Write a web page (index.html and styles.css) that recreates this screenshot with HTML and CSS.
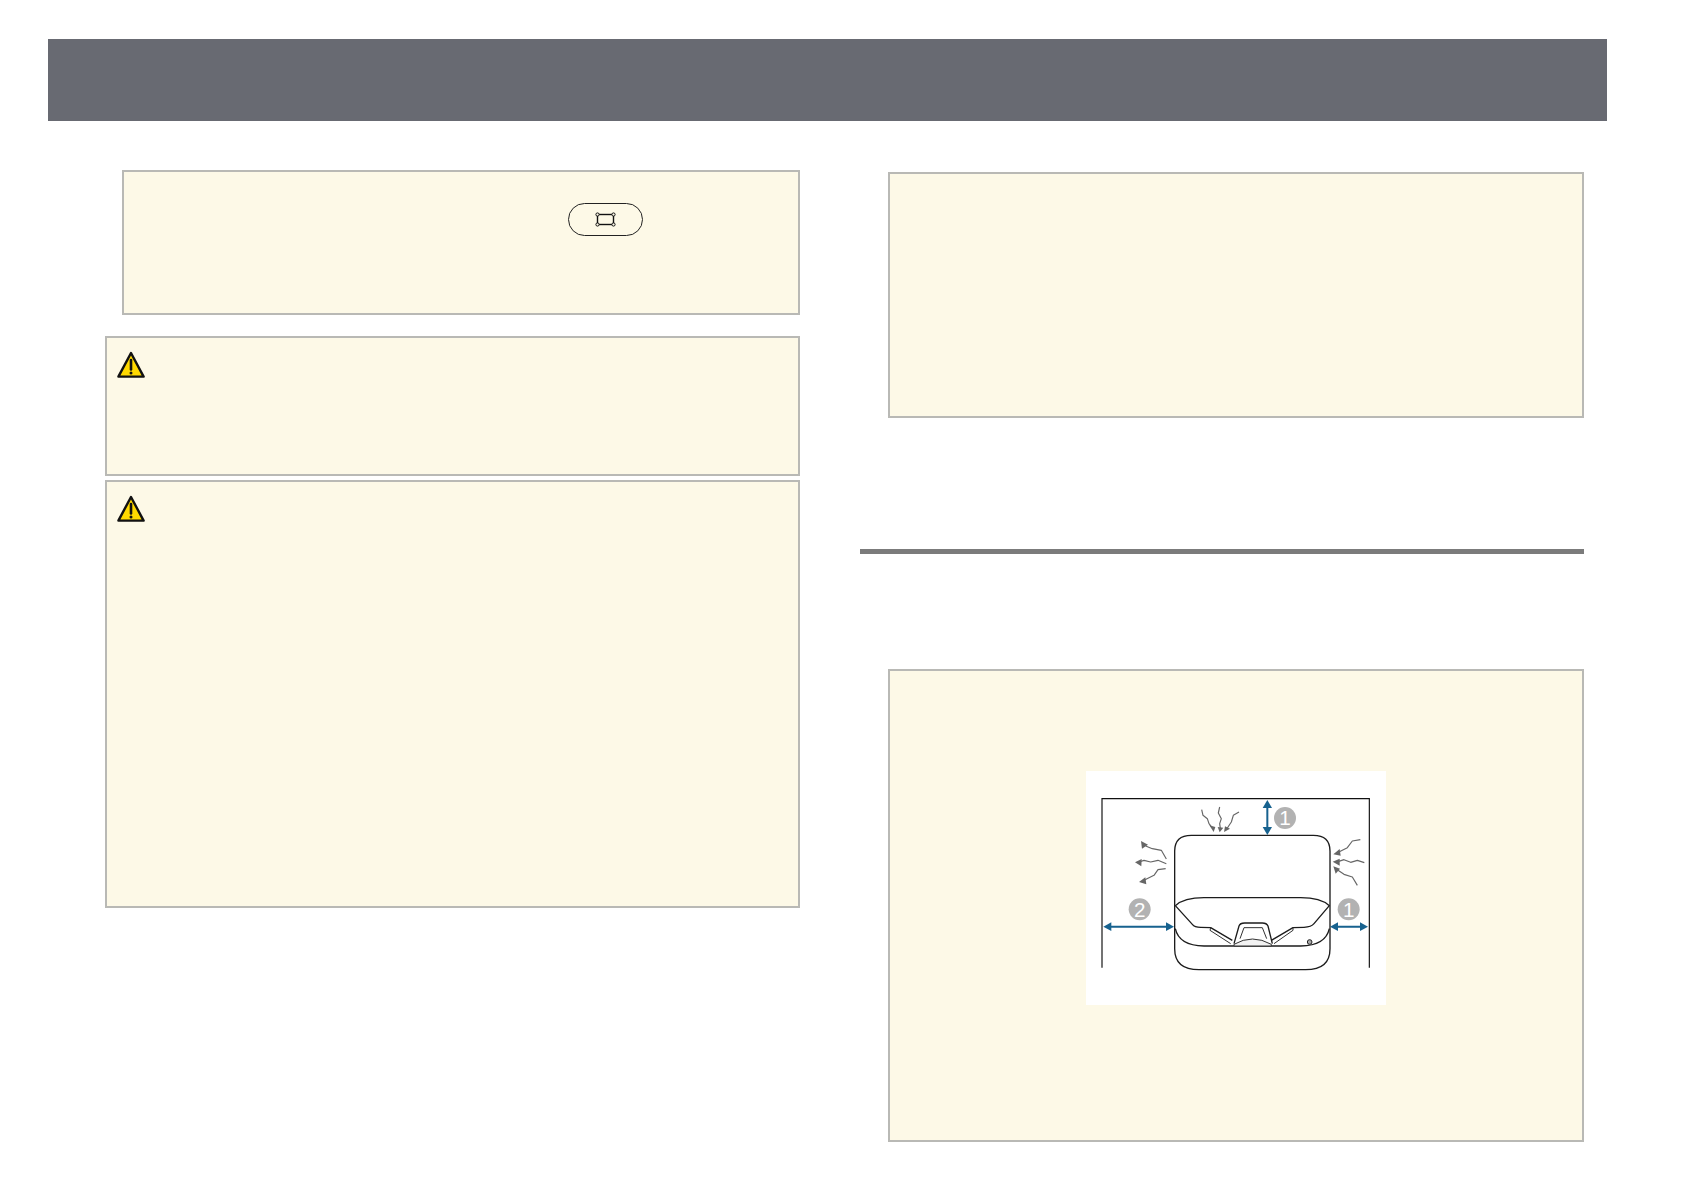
FILE: index.html
```html
<!DOCTYPE html>
<html lang="en">
<head>
<meta charset="utf-8">
<title>Projector installation notes</title>
<link rel="stylesheet" href="styles.css">
</head>
<body>
<svg class="defs" width="0" height="0" aria-hidden="true">
  <defs>
    <symbol id="warn" viewBox="0 0 28 28">
      <path d="M14 2 L26.6 25.6 H1.4 Z" fill="#ffd900" stroke="#111" stroke-width="2.4" stroke-linejoin="round"/>
      <path d="M14 9 V18.5" stroke="#111" stroke-width="2.6" stroke-linecap="round"/>
      <circle cx="14" cy="22" r="1.5" fill="#111"/>
    </symbol>
  </defs>
</svg>
<header class="topbar"></header>
<main class="columns">
  <section class="col col-left">
    <div class="note note-indented">
      <span class="keycap">
        <svg class="keycap-icon" viewBox="0 0 21 15" width="21" height="15">
          <rect x="2.5" y="2.5" width="16" height="10" fill="none" stroke="#111" stroke-width="1.4"/>
          <circle cx="2.5" cy="2.5" r="1.6" fill="#fdf9e7" stroke="#111"/>
          <circle cx="18.5" cy="2.5" r="1.6" fill="#fdf9e7" stroke="#111"/>
          <circle cx="2.5" cy="12.5" r="1.6" fill="#fdf9e7" stroke="#111"/>
          <circle cx="18.5" cy="12.5" r="1.6" fill="#fdf9e7" stroke="#111"/>
        </svg>
      </span>
    </div>
    <div class="note note-warning note-short">
      <svg class="warn-icon"><use href="#warn"/></svg>
    </div>
    <div class="note note-warning note-tall">
      <svg class="warn-icon"><use href="#warn"/></svg>
    </div>
  </section>
  <section class="col col-right">
    <div class="note note-plain"></div>
    <div class="section-rule"></div>
    <div class="note note-figure">
      <figure class="figure">
        <svg class="diagram" viewBox="46 32 900 702" role="img" aria-label="Ventilation clearance diagram">
          <path class="wall" d="M94 622 V115 H896 V622"/>
          <path class="body" d="M312 272 Q312 225 362 225 H728 Q778 225 778 272 V565 Q778 628 705 628 H385 Q312 628 312 565 Z"/>
          <path class="line" d="M314 436 Q340 412 400 412 H690 Q750 412 776 436 L730 490 Q722 500 700 501 L667 502 L602 540 M314 436 L365 492 Q372 501 390 501 L420 502 L485 540"/>
          <path class="line" d="M314 505 Q325 556 400 557 H690 Q765 556 776 505"/>
          <path class="line" d="M490 550 L505 497 Q508 488 522 488 H575 Q588 488 592 497 L605 550"/>
          <path class="lens" d="M490 552 Q545 520 602 552 V557 H490 Z"/>
          <path class="thin" d="M508 535 L520 502 H575 L588 535 M420 502 L418 510 L480 550 M667 502 L667 510 L610 550"/>
          <circle class="screw" cx="717" cy="545" r="7"/>

          <g class="waves">
            <path d="M393 148 L397 165 L410 175 L415 190 L426 204"/>
            <path d="M447 140 L443 158 L452 175 L447 190 L449 204"/>
            <path d="M505 155 L488 165 L482 185 L470 203"/>
            <path d="M287 296 L272 270 L245 265 L225 257"/>
            <path d="M287 310 L262 300 L240 305 L220 300 L205 305"/>
            <path d="M285 325 L262 328 L250 345 L220 360"/>
            <path d="M869 238 L845 242 L830 262 L803 276"/>
            <path d="M881 307 L860 300 L840 306 L820 298 L802 304"/>
            <path d="M860 375 L845 350 L820 342 L802 330"/>
          </g>
          <g class="wave-heads">
            <polygon points="416,195 434,200 429,215"/>
            <polygon points="441,200 458,202 447,216"/>
            <polygon points="463,198 478,205 460,215"/>
            <polygon points="211,242 232,253 214,265"/>
            <polygon points="193,306 213,296 212,318"/>
            <polygon points="205,365 224,351 227,372"/>
            <polygon points="788,282 807,266 810,286"/>
            <polygon points="786,304 807,295 807,316"/>
            <polygon points="788,318 808,325 795,340"/>
          </g>

          <g class="arrows">
            <path d="M590 130 V212 M110 499 H298 M790 499 H880"/>
          </g>
          <g class="arrow-heads">
            <polygon points="590,119 604,143 576,143"/>
            <polygon points="590,224 604,200 576,200"/>
            <polygon points="98,499 122,486 122,512"/>
            <polygon points="310,499 286,486 286,512"/>
            <polygon points="778,499 802,486 802,512"/>
            <polygon points="892,499 868,486 868,512"/>
          </g>

          <circle class="badge" cx="643" cy="173" r="33"/>
          <text class="badge-text" x="643" y="195">1</text>
          <circle class="badge" cx="207" cy="447" r="33"/>
          <text class="badge-text" x="207" y="469">2</text>
          <circle class="badge" cx="834" cy="447" r="33"/>
          <text class="badge-text" x="834" y="469">1</text>
        </svg>
      </figure>
    </div>
  </section>
</main>
</body>
</html>
```
FILE: styles.css
```css
html, body {
  margin: 0;
  padding: 0;
  background: #fff;
  font-family: "Liberation Sans", Arial, sans-serif;
}

body {
  height: 1190px;
  overflow: hidden;
}

.defs {
  display: block;
  height: 0;
}

.topbar {
  height: 82px;
  margin: 39px 77px 0 48px;
  background: #686a72;
}

.columns {
  display: grid;
  grid-template-columns: 695px 724px;
  column-gap: 60px;
  margin-left: 105px;
}

.col {
  display: flex;
  flex-direction: column;
}

.note {
  box-sizing: border-box;
  background: #fdf9e7;
  border: 2px solid #b9b9b5;
}

.note-indented {
  height: 145px;
  margin: 49px 0 0 17px;
  padding: 31px 0 0 444px;
}

.keycap {
  box-sizing: border-box;
  display: flex;
  align-items: center;
  justify-content: center;
  width: 75px;
  height: 33px;
  border: 1px solid #222;
  border-radius: 17px;
}

.keycap-icon {
  display: block;
}

.note-warning {
  padding: 13px 0 0 10px;
}

.note-short {
  height: 140px;
  margin-top: 21px;
}

.note-tall {
  height: 428px;
  margin-top: 4px;
}

.warn-icon {
  display: block;
  width: 28px;
  height: 28px;
}

.col-right {
  padding-top: 51px;
}

.note-plain {
  width: 696px;
  height: 246px;
  margin-left: 28px;
}

.section-rule {
  height: 5px;
  margin-top: 131px;
  background: #7b7b7b;
}

.note-figure {
  width: 696px;
  height: 473px;
  margin: 115px 0 0 28px;
  padding-top: 100px;
}

.figure {
  width: 300px;
  height: 234px;
  margin: 0 0 0 196px;
  background: #fff;
}

.diagram {
  display: block;
  width: 100%;
  height: 100%;
}

.wall {
  fill: none;
  stroke: #111;
  stroke-width: 3.5;
}

.body,
.line {
  fill: none;
  stroke: #1c1c1c;
  stroke-width: 4;
  stroke-linejoin: round;
}

.thin {
  fill: none;
  stroke: #333;
  stroke-width: 3;
}

.lens {
  fill: #f2f2f2;
  stroke: #333;
  stroke-width: 3;
}

.screw {
  fill: #aaa;
  stroke: #222;
  stroke-width: 3;
}

.waves {
  fill: none;
  stroke: #666;
  stroke-width: 3.5;
  stroke-linejoin: round;
}

.wave-heads {
  fill: #666;
}

.arrows {
  fill: none;
  stroke: #17628f;
  stroke-width: 6;
}

.arrow-heads {
  fill: #17628f;
}

.badge {
  fill: #b2b2b2;
}

.badge-text {
  fill: #fff;
  font-family: "Liberation Sans", Arial, sans-serif;
  font-size: 62px;
  text-anchor: middle;
}
```
